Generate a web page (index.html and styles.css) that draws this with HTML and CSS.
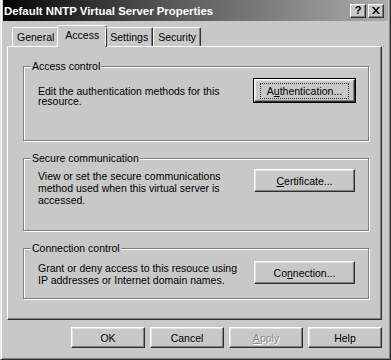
FILE: index.html
```html
<!DOCTYPE html>
<html lang="en">

<head>
    <meta charset="UTF-8">
    <title>Default NNTP Virtual Server Properties</title>
    <link rel="stylesheet" href="styles.css">
</head>

<body>
    <div class="window">
        <div class="titlebar">
            <span class="title">Default NNTP Virtual Server Properties</span>
            <div class="caption-buttons">
                <button class="caption-btn">?</button>
                <button class="caption-btn">
                    <svg width="8" height="7" viewBox="0 0 8 7">
                        <path d="M0 0h2l2 2.5 2-2.5h2L5 3.5 8 7H6L4 4.5 2 7H0l3-3.5z" fill="#000" />
                    </svg>
                </button>
            </div>
        </div>

        <div class="dialog">
            <div class="tabs">
                <div class="tab">General</div>
                <div class="tab active">Access</div>
                <div class="tab">Settings</div>
                <div class="tab">Security</div>
            </div>

            <div class="panel">
                <fieldset class="group group-access">
                    <legend>Access control</legend>
                    <div class="group-row">
                        <p>Edit the authentication methods for this resource.</p>
                        <button class="btn btn-group default"><span class="focus">A<u>u</u>thentication...</span></button>
                    </div>
                </fieldset>

                <fieldset class="group group-secure">
                    <legend>Secure communication</legend>
                    <div class="group-row">
                        <p>View or set the secure communications method used when this virtual server is accessed.</p>
                        <button class="btn btn-group"><u>C</u>ertificate...</button>
                    </div>
                </fieldset>

                <fieldset class="group group-connection">
                    <legend>Connection control</legend>
                    <div class="group-row">
                        <p>Grant or deny access to this resouce using IP addresses or Internet domain names.</p>
                        <button class="btn btn-group">Co<u>n</u>nection...</button>
                    </div>
                </fieldset>
            </div>

            <div class="dialog-buttons">
                <button class="btn">OK</button>
                <button class="btn">Cancel</button>
                <button class="btn" disabled><u>A</u>pply</button>
                <button class="btn">Help</button>
            </div>
        </div>
    </div>
</body>

</html>
```

FILE: styles.css
```css
body {
    margin: 0;
    font-family: "Liberation Sans", Arial, sans-serif;
    font-size: 10.5px;
    color: #000;
    background: #c8c8c8;
}

.window {
    width: 391px;
    height: 360px;
    box-sizing: border-box;
    background: #c8c8c8;
    border-left: 1px solid #e6e6e6;
    border-right: 1px solid #303030;
    border-bottom: 1px solid #303030;
    box-shadow: inset 1px 0 #fff, inset -1px -1px #808080;
    padding: 0 2px 2px 2px;
}

.titlebar {
    height: 21px;
    display: flex;
    align-items: center;
    justify-content: space-between;
    padding: 0 4px 0 1px;
    background: linear-gradient(to right, #050505, #5a5a5a 45%, #acacac);
}

.title {
    color: #fff;
    font-weight: bold;
    font-size: 11.4px;
}

.caption-buttons {
    display: flex;
    gap: 2px;
}

.caption-btn {
    width: 16px;
    height: 14px;
    padding: 0;
    display: flex;
    align-items: center;
    justify-content: center;
    background: #c8c8c8;
    border: 1px solid;
    border-color: #fff #303030 #303030 #fff;
    box-shadow: inset -1px -1px #808080;
    font-family: "Liberation Sans", Arial, sans-serif;
    font-weight: bold;
    font-size: 11px;
    line-height: 1;
    color: #000;
}

.dialog {
    padding: 4px 6px 0 4px;
}

/* tab strip */
.tabs {
    display: flex;
    align-items: flex-end;
    padding-left: 5px;
    height: 21px;
    position: relative;
    z-index: 1;
}

.tab {
    height: 18px;
    line-height: 18px;
    padding: 0 4px;
    border-left: 1px solid #fff;
    border-top: 1px solid #fff;
    border-right: 1px solid #303030;
    box-shadow: inset -1px 0 #808080;
    border-radius: 2px 2px 0 0;
}

.tab.active {
    height: 21px;
    line-height: 19px;
    margin: 0 -2px -1px;
    padding: 0 7px;
    background: #c8c8c8;
}

.panel {
    height: 274px;
    box-sizing: border-box;
    border-left: 1px solid #fff;
    border-top: 1px solid #fff;
    border-right: 1px solid #303030;
    border-bottom: 1px solid #303030;
    box-shadow: inset -1px -1px #808080;
    padding: 13px 0 0 15px;
}

/* etched group boxes */
.group {
    width: 346px;
    box-sizing: border-box;
    margin: 0 0 11px 0;
    padding: 7px 13px 0 14px;
    border: 1px solid #808080;
    box-shadow: inset 1px 1px #fff, 1px 1px #fff;
}

.group legend {
    margin-left: -7px;
    padding: 0 1px;
    line-height: 12px;
    background: #c8c8c8;
}

.group-access {
    height: 81px;
}

.group-secure {
    height: 79px;
    padding-top: 5px;
}

.group-connection {
    height: 57px;
}

.group-row {
    display: flex;
    justify-content: space-between;
    align-items: flex-start;
}

.group-row p {
    width: 201px;
    margin: 0;
    line-height: 12px;
    padding-top: 1px;
}

.group-access .group-row p {
    line-height: 10px;
    padding-top: 7px;
}

/* push buttons */
.btn {
    width: 74px;
    height: 21px;
    padding: 0;
    background: #c8c8c8;
    border: 1px solid;
    border-color: #fff #303030 #303030 #fff;
    box-shadow: inset -1px -1px #808080, inset 1px 1px #e4e4e4;
    font-family: "Liberation Sans", Arial, sans-serif;
    font-size: 10.5px;
    color: #000;
}

.btn-group {
    width: 101px;
    height: 23px;
}

.btn.default {
    outline: 1px solid #000;
    outline-offset: 0;
}

.btn .focus {
    display: inline-block;
    padding: 1px 6px;
    outline: 1px dotted #303030;
}

.btn:disabled {
    color: #8a8a8a;
    text-shadow: 1px 1px #fff;
}

.dialog-buttons {
    display: flex;
    justify-content: flex-end;
    gap: 5px;
    margin-top: 7px;
}
```
